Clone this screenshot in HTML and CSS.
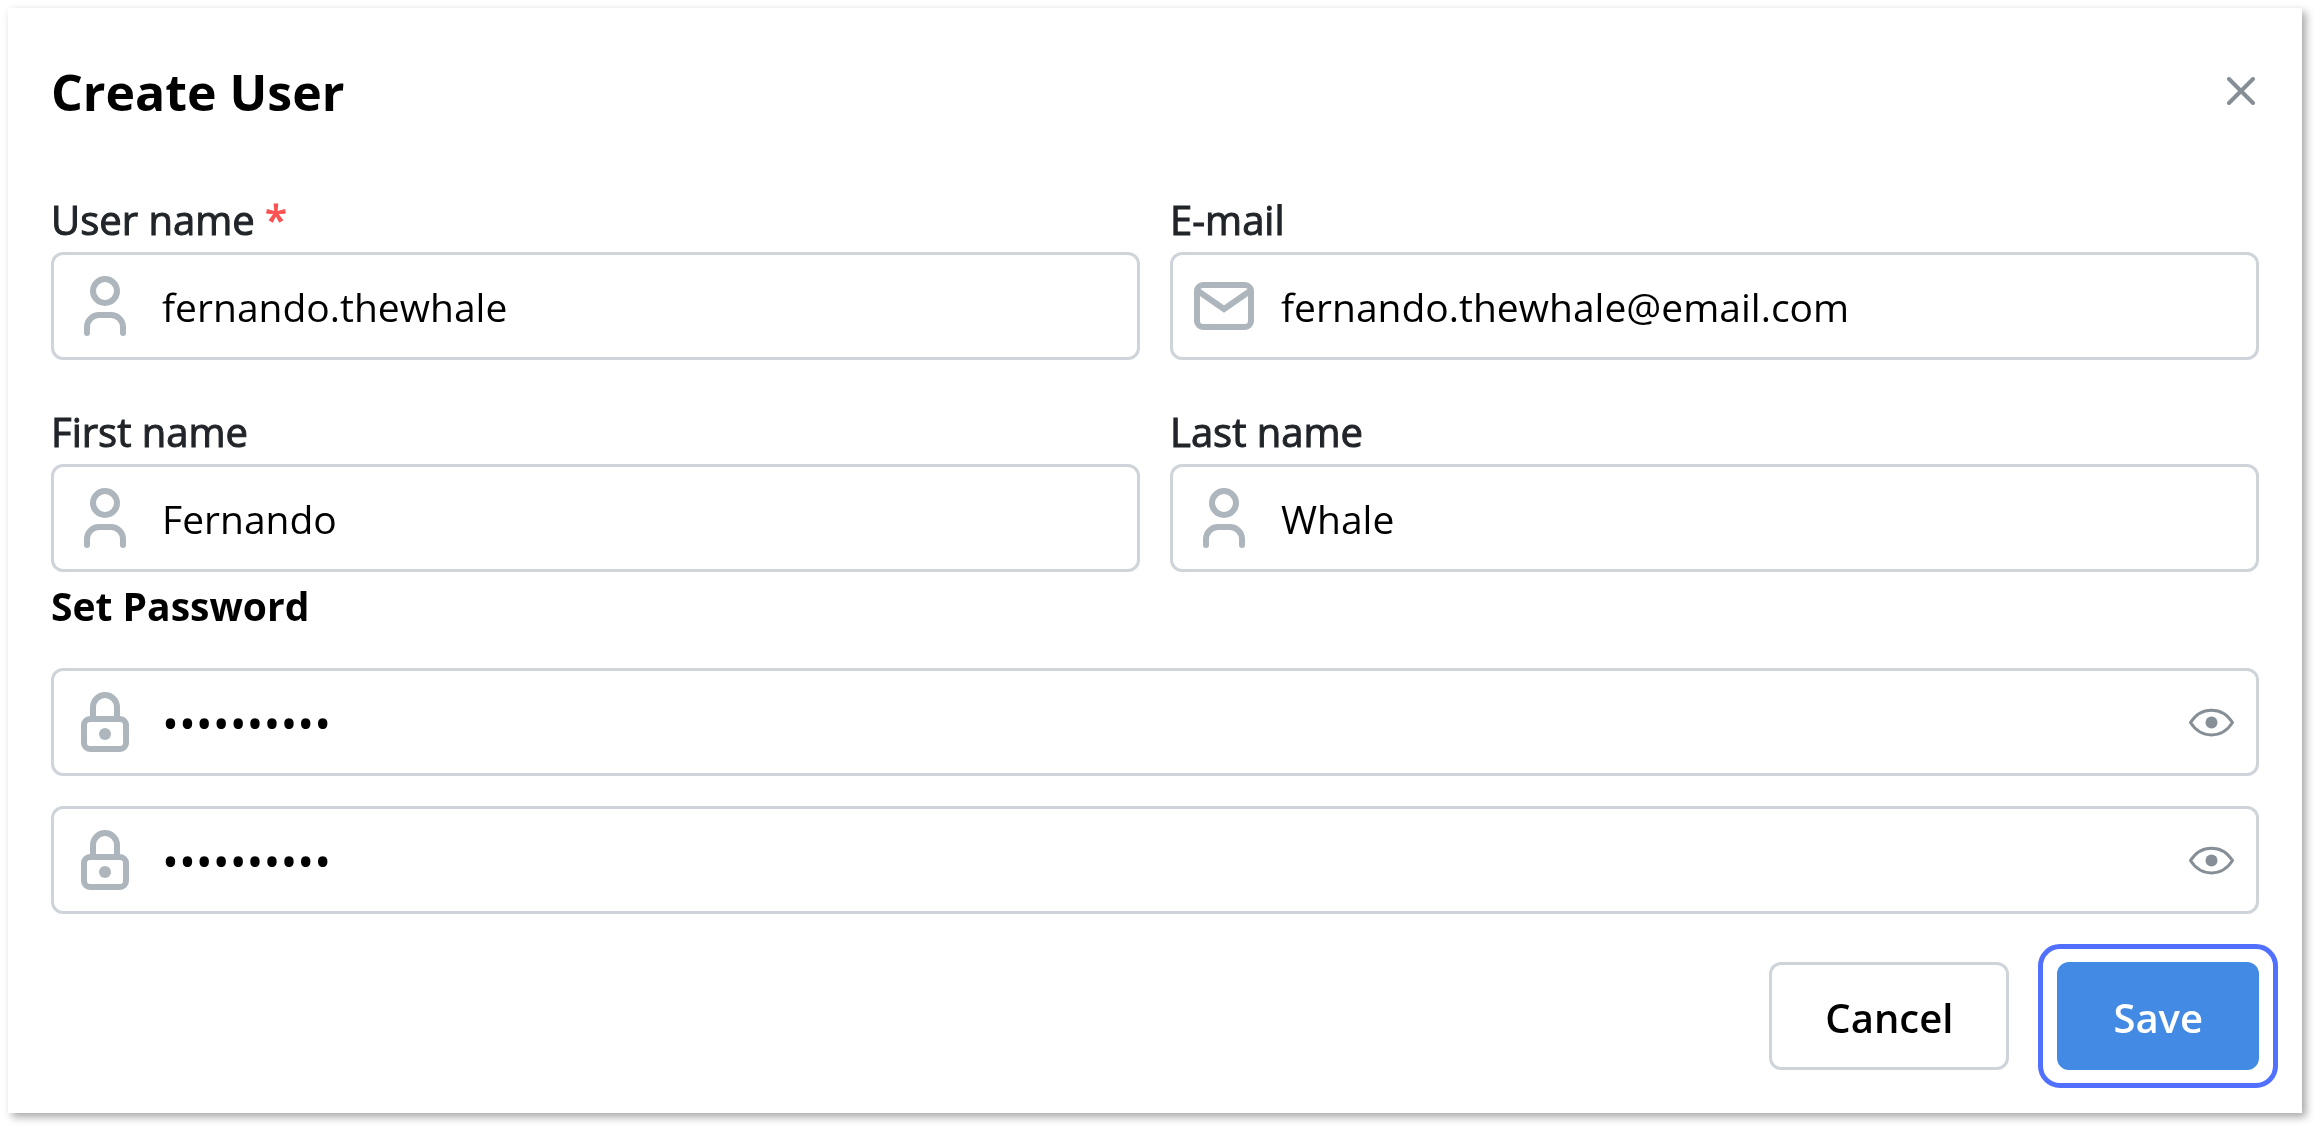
FILE: index.html
```html
<!DOCTYPE html>
<html lang="en">
<head>
    <meta charset="UTF-8">
    <meta name="viewport" content="width=device-width, initial-scale=1.0">
    <title>Create User</title>
    <link rel="stylesheet" href="styles.css">
</head>
<body>

    <!-- Shared icons -->
    <svg class="sprite" aria-hidden="true">
        <symbol id="icon-user" viewBox="0 0 60 60">
            <circle cx="30" cy="15" r="12" />
            <path d="M12 57V51A12 12 0 0 1 24 39H36A12 12 0 0 1 48 51V57" stroke-linecap="round" />
        </symbol>
        <symbol id="icon-mail" viewBox="0 0 60 60">
            <rect x="3" y="9" width="54" height="42" rx="6" />
            <path d="M4 15L30 33L56 15" />
        </symbol>
        <symbol id="icon-lock" viewBox="0 0 60 60">
            <rect x="9" y="27" width="42" height="30" rx="6" />
            <path d="M18 27V15A12 12 0 0 1 42 15V27" />
            <circle cx="30" cy="42" r="6" fill="currentColor" stroke="none" />
        </symbol>
        <symbol id="icon-eye" viewBox="0 0 45 45">
            <path d="M1.5 22.5C12 6 33 6 43.5 22.5C33 39 12 39 1.5 22.5Z" stroke-linejoin="round" />
            <circle cx="22.5" cy="22.5" r="6" fill="currentColor" stroke="none" />
        </symbol>
    </svg>

    <form class="modal">
        <header class="modal-header">
            <h1>Create User</h1>
            <button type="button" class="icon-button" aria-label="Close">
                <svg class="close-icon" viewBox="0 0 28 28"><path d="M2 2L26 26M26 2L2 26" /></svg>
            </button>
        </header>

        <div class="fields">
            <div class="field">
                <label for="userName">User name <span class="required">*</span></label>
                <div class="input-box">
                    <svg class="icon"><use href="#icon-user" /></svg>
                    <input type="text" id="userName" value="fernando.thewhale" required>
                </div>
            </div>
            <div class="field">
                <label for="email">E-mail</label>
                <div class="input-box">
                    <svg class="icon"><use href="#icon-mail" /></svg>
                    <input type="email" id="email" value="fernando.thewhale@email.com">
                </div>
            </div>
            <div class="field">
                <label for="firstName">First name</label>
                <div class="input-box">
                    <svg class="icon"><use href="#icon-user" /></svg>
                    <input type="text" id="firstName" value="Fernando">
                </div>
            </div>
            <div class="field">
                <label for="lastName">Last name</label>
                <div class="input-box">
                    <svg class="icon"><use href="#icon-user" /></svg>
                    <input type="text" id="lastName" value="Whale">
                </div>
            </div>
        </div>

        <!-- Password and confirmation -->
        <h2>Set Password</h2>
        <div class="passwords">
            <div class="input-box">
                <svg class="icon"><use href="#icon-lock" /></svg>
                <input type="password" aria-label="Password" value="whale12345">
                <button type="button" class="icon-button" aria-label="Show password">
                    <svg class="eye-icon"><use href="#icon-eye" /></svg>
                </button>
            </div>
            <div class="input-box">
                <svg class="icon"><use href="#icon-lock" /></svg>
                <input type="password" aria-label="Confirm password" value="whale12345">
                <button type="button" class="icon-button" aria-label="Show password">
                    <svg class="eye-icon"><use href="#icon-eye" /></svg>
                </button>
            </div>
        </div>

        <footer class="actions">
            <button type="button" class="button">Cancel</button>
            <button type="submit" class="button primary">Save</button>
        </footer>
    </form>

</body>
</html>
```
FILE: styles.css
```css
* {
    box-sizing: border-box;
}

body {
    margin: 0;
    padding: 8px 13px 13px 8px;
    background-color: white;
    color: black;
    font-family: "Open Sans", "Noto Sans", sans-serif;
    font-size: 40px;
    line-height: 64px;
}

.sprite {
    position: absolute;
    width: 0;
    height: 0;
}

.modal {
    padding: 44px 43px 43px;
    background-color: white;
    filter: drop-shadow(4px 4px 4px rgba(0, 0, 0, 0.35));
}

/* Header */
.modal-header {
    display: flex;
    justify-content: space-between;
    align-items: flex-start;
    margin-bottom: 56px;
}

h1 {
    margin: 0;
    font-size: 50px;
    line-height: 80px;
    font-weight: 700;
}

h2 {
    margin: 0 0 28px;
    font-size: 39px;
    line-height: 68px;
    font-weight: 700;
}

svg {
    fill: none;
    stroke: currentColor;
}

.icon-button {
    display: flex;
    padding: 0;
    border: none;
    background: none;
    color: #868e96;
    cursor: pointer;
}

.close-icon {
    width: 28px;
    height: 28px;
    margin: 25px 4px;
    stroke-width: 4;
    stroke-linecap: round;
}

/* Fields */
.fields {
    display: grid;
    grid-template-columns: 1fr 1fr;
    gap: 40px 30px;
}

label {
    display: block;
    color: #212529;
    -webkit-text-stroke: 1px;
}

.required {
    color: #fa5252;
}

.input-box {
    display: flex;
    align-items: center;
    height: 108px;
    padding: 0 22px 0 21px;
    border: 3px solid #ced4da;
    border-radius: 12px;
}

.icon {
    flex: none;
    width: 60px;
    height: 60px;
    color: #adb5bd;
    stroke-width: 6;
}

.eye-icon {
    width: 45px;
    height: 45px;
    stroke-width: 3;
}

input {
    flex: 1;
    min-width: 0;
    height: 64px;
    margin-left: 27px;
    padding: 2px 0 0;
    border: none;
    outline: none;
    background: none;
    color: black;
    font: inherit;
    font-size: 39px;
}

input[type="password"] {
    font-size: 45px;
}

.passwords {
    display: grid;
    gap: 30px;
}

/* Buttons */
.actions {
    display: flex;
    justify-content: flex-end;
    gap: 48px;
    margin-top: 48px;
}

.button {
    position: relative;
    height: 108px;
    padding: 4px 53px 0;
    border: 3px solid #ced4da;
    border-radius: 12px;
    background-color: white;
    color: black;
    font: inherit;
    font-weight: 600;
    cursor: pointer;
}

.primary {
    border-color: #428ae3;
    background-color: #428ae3;
    color: white;
}

/* Focus ring */
.primary::after {
    content: "";
    position: absolute;
    inset: -21px -22px;
    border: 5px solid #5270ff;
    border-radius: 22px;
}
```
